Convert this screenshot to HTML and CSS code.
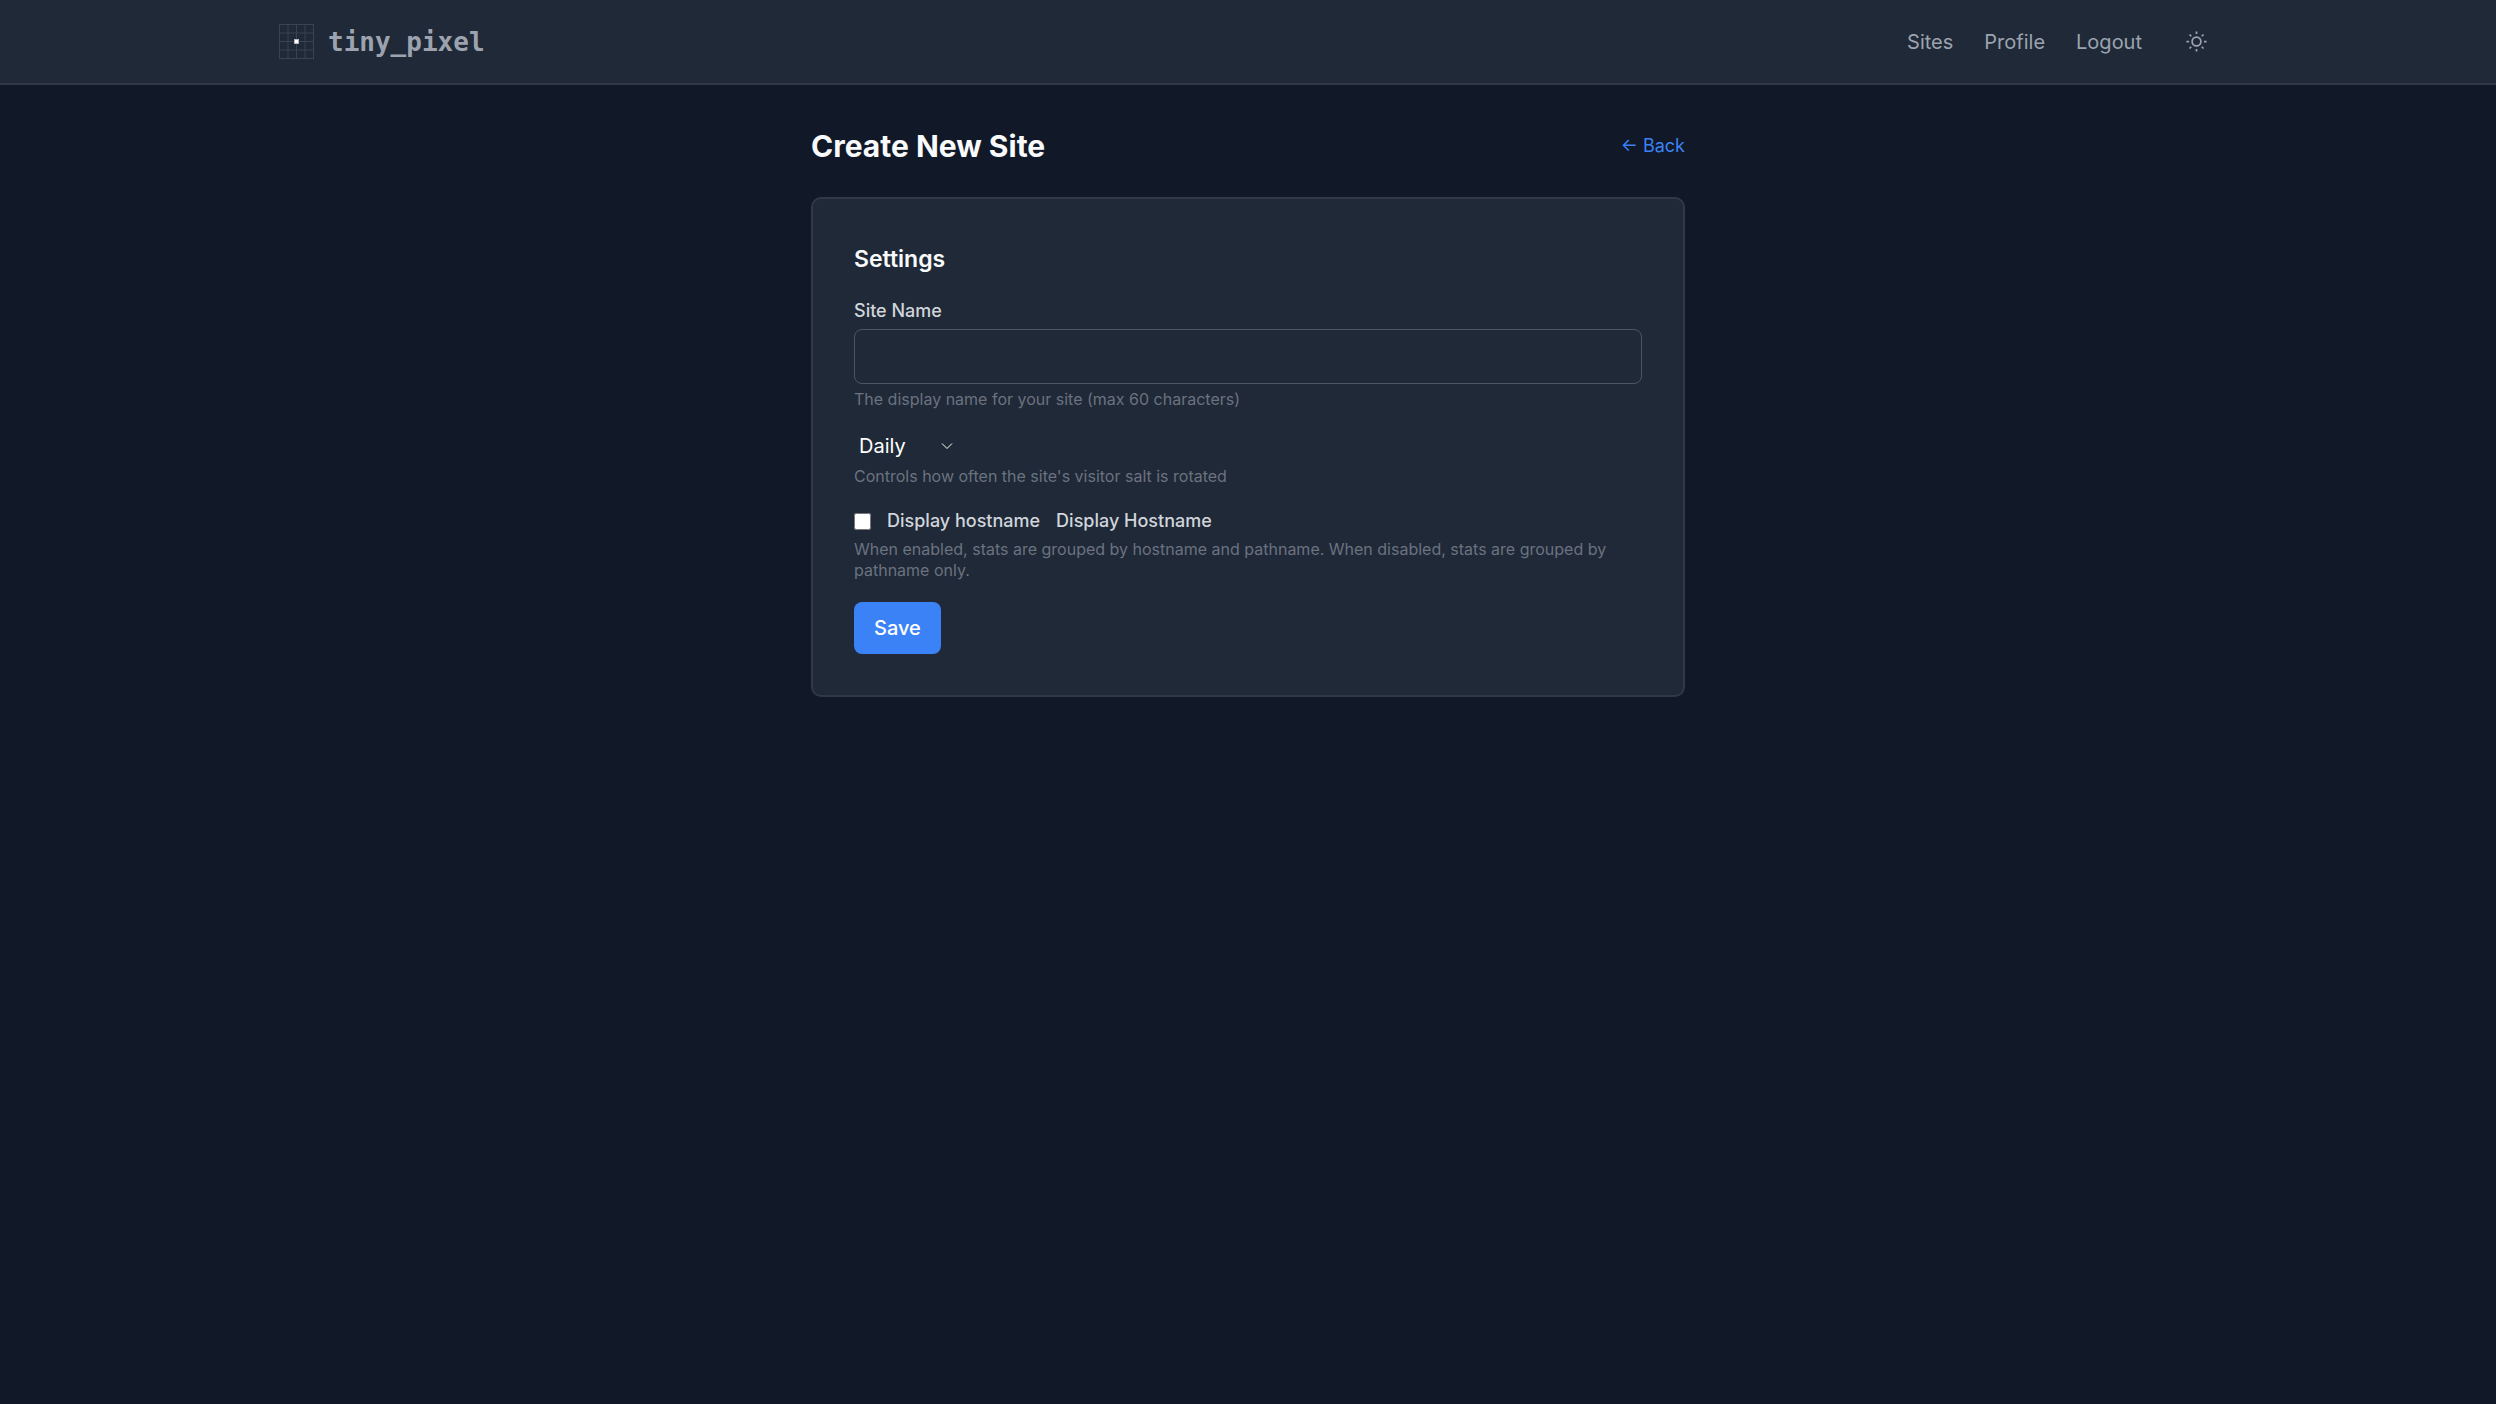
FILE: index.html
```html
<!DOCTYPE html>
<html lang="en">
<head>
<meta charset="utf-8">
<meta name="viewport" content="width=device-width, initial-scale=1">
<title>Create New Site · tiny_pixel</title>
<link rel="stylesheet" href="styles.css">
</head>
<body>
<header class="site-header">
  <div class="header-inner">
    <a class="brand" href="#">
      <svg class="brand-mark" viewBox="0 0 35 35" aria-hidden="true">
        <path class="grid-line" d="M.5 0V35M9 0V35M17.5 0V35M26 0V35M34.5 0V35M0 .5H35M0 9H35M0 17.5H35M0 26H35M0 34.5H35"/>
        <rect class="dot-edge" x="15" y="15" width="5" height="5"/>
        <rect class="dot" x="16" y="16" width="3" height="3"/>
      </svg>
      <span>tiny_pixel</span>
    </a>
    <nav class="nav">
      <a href="#">Sites</a>
      <a href="#">Profile</a>
      <a href="#">Logout</a>
      <button class="theme-toggle" type="button" aria-label="Toggle theme">
        <svg viewBox="0 0 24 24" aria-hidden="true">
          <circle cx="12" cy="12" r="5"/>
          <path d="M12 0.500V3.500M12 20.500V23.500M0.500 12H3.500M20.500 12H23.500M4 4L6 6M18 18L20 20M4 20L6 18M18 6L20 4"/>
        </svg>
      </button>
    </nav>
  </div>
</header>
<main class="page">
  <div class="page-head">
    <h1>Create New Site</h1>
    <a class="back" href="#">← Back</a>
  </div>
  <form class="card">
    <h2>Settings</h2>
    <div class="field">
      <label class="label" for="name">Site Name</label>
      <input class="text-input" id="name" type="text" maxlength="60">
      <p class="hint">The display name for your site (max 60 characters)</p>
    </div>
    <div class="field">
      <div class="select-wrap">
        <select class="select" aria-label="Salt rotation">
          <option>Daily</option>
          <option>Weekly</option>
          <option>Monthly</option>
        </select>
        <svg class="chevron" viewBox="0 0 12 8" aria-hidden="true"><path d="M1 1.500L6 6.500L11 1.500"/></svg>
      </div>
      <p class="hint">Controls how often the site's visitor salt is rotated</p>
    </div>
    <div class="field">
      <div class="check-row">
        <input class="checkbox" id="host" type="checkbox">
        <label class="label" for="host">Display hostname</label>
        <label class="label" for="host">Display Hostname</label>
      </div>
      <p class="hint">When enabled, stats are grouped by hostname and pathname. When disabled, stats are grouped by pathname only.</p>
    </div>
    <button class="save" type="submit">Save</button>
  </form>
</main>
</body>
</html>
```
FILE: styles.css
```css
* {
  box-sizing: border-box;
}

body {
  margin: 0;
  min-height: 100vh;
  background: #111827;
  color: #f9fafb;
  font-family: Inter, "Liberation Sans", sans-serif;
  font-size: 20px;
  line-height: 30px;
}

h1, h2, p {
  margin: 0;
}

a {
  text-decoration: none;
}

.site-header {
  background: #1f2937;
  border-bottom: 2px solid #2f3947;
}

.header-inner {
  display: flex;
  align-items: center;
  justify-content: space-between;
  max-width: 2002px;
  min-height: 83px;
  margin: 0 auto;
  padding: 0 32px;
}

.brand {
  display: flex;
  align-items: center;
  gap: 14px;
  color: #9ca3af;
  font-family: "DejaVu Sans Mono", monospace;
  font-size: 26px;
  font-weight: 700;
}

.brand-mark {
  width: 35px;
  height: 35px;
}

.grid-line {
  fill: none;
  stroke: #3a4350;
  stroke-width: 1;
}

.dot-edge {
  fill: #b5b8bd;
}

.dot {
  fill: #ffffff;
}

.nav {
  display: flex;
  align-items: center;
  gap: 31px;
}

.nav a {
  color: #9ca3af;
}

.theme-toggle {
  display: grid;
  margin-left: 3px;
  padding: 10px;
  border: 0;
  background: none;
  color: #9ca3af;
}

.theme-toggle svg {
  width: 21px;
  height: 21px;
  fill: none;
  stroke: currentColor;
  stroke-width: 2;
}

.page {
  max-width: 874px;
  margin: 0 auto;
  padding: 41px 0;
}

.page-head {
  display: flex;
  align-items: center;
  justify-content: space-between;
  margin-bottom: 31px;
}

h1 {
  font-size: 30px;
  font-weight: 700;
  line-height: 40px;
}

.back {
  color: #3b82f6;
  font-size: 18px;
}

.card {
  padding: 41px;
  border: 2px solid #2f3947;
  border-radius: 10px;
  background: #1f2937;
}

h2 {
  margin-bottom: 20px;
  font-size: 23px;
  font-weight: 600;
  line-height: 38px;
}

.field {
  margin-bottom: 21px;
}

.label {
  color: #d1d5db;
  font-size: 18px;
  font-weight: 500;
  line-height: 26px;
}

.field > .label {
  display: block;
  margin-bottom: 5px;
}

.text-input {
  display: block;
  width: 100%;
  height: 55px;
  padding: 10px 16px;
  border: 1px solid #4b5563;
  border-radius: 8px;
  background: #1f2937;
  color: #f9fafb;
  font: inherit;
}

.hint {
  margin-top: 5px;
  color: #6b7280;
  font-size: 16px;
  line-height: 21px;
}

.select-wrap {
  display: inline-grid;
  grid-template-columns: 99px;
  align-items: center;
  vertical-align: top;
}

.select {
  grid-area: 1 / 1;
  height: 30px;
  padding: 0 5px;
  border: 0;
  background: none;
  color: #ffffff;
  font: inherit;
  appearance: none;
}

.chevron {
  grid-area: 1 / 1;
  justify-self: end;
  width: 12px;
  height: 8px;
  fill: none;
  stroke: #ffffff;
  pointer-events: none;
}

.check-row {
  display: flex;
  align-items: center;
  gap: 16px;
}

.checkbox {
  width: 17px;
  height: 17px;
  margin: 0;
}

.save {
  padding: 11px 20px;
  border: 0;
  border-radius: 8px;
  background: #3b82f6;
  color: #ffffff;
  font: inherit;
  font-weight: 500;
}
```
